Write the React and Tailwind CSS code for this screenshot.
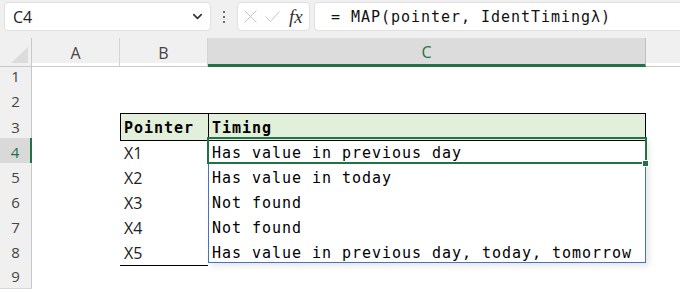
import React from 'react';
import { ChevronDown } from 'lucide-react';

const ui = { fontFamily: '"Open Sans", "Liberation Sans", sans-serif' };
const mono = { fontFamily: '"DejaVu Sans Mono", "Liberation Mono", monospace' };

const rows = [
    { n: 1 },
    { n: 2 },
    { n: 3, header: true },
    { n: 4, b: 'X1', c: 'Has value in previous day', selected: true },
    { n: 5, b: 'X2', c: 'Has value in today' },
    { n: 6, b: 'X3', c: 'Not found' },
    { n: 7, b: 'X4', c: 'Not found' },
    { n: 8, b: 'X5', c: 'Has value in previous day, today, tomorrow', last: true },
    { n: 9 },
];

const Toolbar = () => (
    <div className="h-[38px] bg-[#f0f0f0] flex items-start pt-[2px] pl-[4px] gap-[4px]">
        {/* Name box */}
        <div className="w-[207px] h-[29px] bg-white border border-[#e0e0e0] rounded-[4px] flex items-center justify-between pl-[8px] pr-[5px]">
            <span className="text-[16px] text-[#222]" style={ui}>C4</span>
            <ChevronDown size={15} strokeWidth={2.6} className="text-[#333]" />
        </div>
        {/* Dots */}
        <div className="w-[18px] h-[29px] flex flex-col items-center justify-center gap-[3px]">
            <span className="w-[2px] h-[2px] bg-[#444] rounded-full" />
            <span className="w-[2px] h-[2px] bg-[#444] rounded-full" />
            <span className="w-[2px] h-[2px] bg-[#444] rounded-full" />
        </div>
        {/* Cancel / enter / fx */}
        <div className="w-[73px] h-[29px] bg-white border border-[#e0e0e0] rounded-[4px] flex items-center pl-[6px] gap-[8px]">
            <svg width="13" height="13" viewBox="0 0 13 13" fill="none" stroke="#c4c4c4" strokeWidth="1">
                <path d="M0.5 0.5l12 12M12.5 0.5l-12 12" />
            </svg>
            <svg width="15" height="11" viewBox="0 0 15 11" fill="none" stroke="#c4c4c4" strokeWidth="1">
                <path d="M0.5 5.5l5 5 9-10" />
            </svg>
            <span className="text-[19px] italic text-[#333] ml-[1px] leading-none" style={{ fontFamily: '"Liberation Serif", serif' }}>fx</span>
        </div>
        {/* Formula */}
        <div className="flex-1 h-[29px] bg-white border border-[#e0e0e0] border-r-0 rounded-l-[4px] flex items-center pl-[16px] pt-[1px]">
            <span className="text-[15px] tracking-[0.97px] text-[#111]" style={mono}>= MAP(pointer, IdentTimingλ)</span>
        </div>
    </div>
);

const ColumnHeaders = () => (
    <div className="grid grid-cols-[32px_88px_88px_438px_1fr] h-[25px] bg-[#f0f0f0]" style={ui}>
        <div className="border-r border-b border-[#c8c8c8] relative">
            <svg width="17" height="16" className="absolute right-[3px] bottom-[3px]">
                <polygon points="17,0 17,16 0,16" fill="#dcdcdc" />
            </svg>
        </div>
        <div className="border-r border-b border-[#d4d4d4] border-b-[#c8c8c8] flex items-center justify-center pt-[1px] text-[16px] text-[#444]">A</div>
        <div className="border-r border-b border-[#d4d4d4] border-b-[#c8c8c8] flex items-center justify-center pt-[1px] text-[16px] text-[#444]">B</div>
        <div className="bg-[#dcdcdc] border-r border-[#c0c0c0] border-b-[3px] border-b-[#217346] flex items-center justify-center pt-[2px] text-[16px] text-[#217346]">C</div>
        <div className="border-b border-[#c8c8c8]" />
    </div>
);

const Row = ({ row }) => {
    const cellText = 'text-[15px] tracking-[0.97px] text-black pl-[4px] pt-[3px] whitespace-nowrap';
    return (
        <div className="grid grid-cols-[32px_88px_88px_438px_1fr] h-[25px]">
            <div
                className={
                    row.selected
                        ? 'bg-[#d9d9d9] border-r-[2px] border-r-[#217346] border-b border-b-[#d4d4d4] flex items-center justify-center pt-[2px] text-[15px] text-[#217346]'
                        : 'bg-[#f0f0f0] border-r border-r-[#c8c8c8] border-b border-b-[#d8d8d8] flex items-center justify-center pt-[2px] text-[15px] text-[#444]'
                }
                style={ui}
            >
                {row.n}
            </div>
            <div />
            {row.header ? (
                <>
                    <div className="bg-[#e2efda] border-t border-b border-l border-black flex items-center pt-[3px] font-bold text-[15px] tracking-[0.97px] text-black pl-[3px]" style={mono}>
                        Pointer
                    </div>
                    <div className="bg-[#e2efda] border border-black flex items-center pt-[3px] font-bold text-[15px] tracking-[0.97px] text-black pl-[3px]" style={mono}>
                        Timing
                    </div>
                </>
            ) : (
                <>
                    <div className={row.last ? 'border-b border-black flex items-center pl-[4px] pt-[3px] text-[16px] text-[#222]' : 'flex items-center pl-[4px] pt-[3px] text-[16px] text-[#222]'} style={ui}>
                        {row.b}
                    </div>
                    <div className="relative flex items-center" style={mono}>
                        {row.c && <span className={cellText}>{row.c}</span>}
                        {row.selected && (
                            <>
                                {/* spill range */}
                                <div className="absolute left-0 top-0 w-[438px] h-[125px] border border-[#4472c4] shadow-[3px_3px_6px_rgba(0,0,0,0.10)] pointer-events-none" />
                                {/* active cell */}
                                <div className="absolute left-[-1px] top-[-1px] w-[440px] h-[27px] border-2 border-[#217346] pointer-events-none" />
                                <div className="absolute left-[434px] top-[22px] w-[7px] h-[7px] bg-[#217346] border border-white pointer-events-none" />
                            </>
                        )}
                    </div>
                </>
            )}
            <div />
        </div>
    );
};

export default function App() {
    return (
        <div className="w-[680px] h-[292px] bg-white overflow-hidden">
            <Toolbar />
            <ColumnHeaders />
            {rows.map((row) => (
                <Row key={row.n} row={row} />
            ))}
        </div>
    );
}
